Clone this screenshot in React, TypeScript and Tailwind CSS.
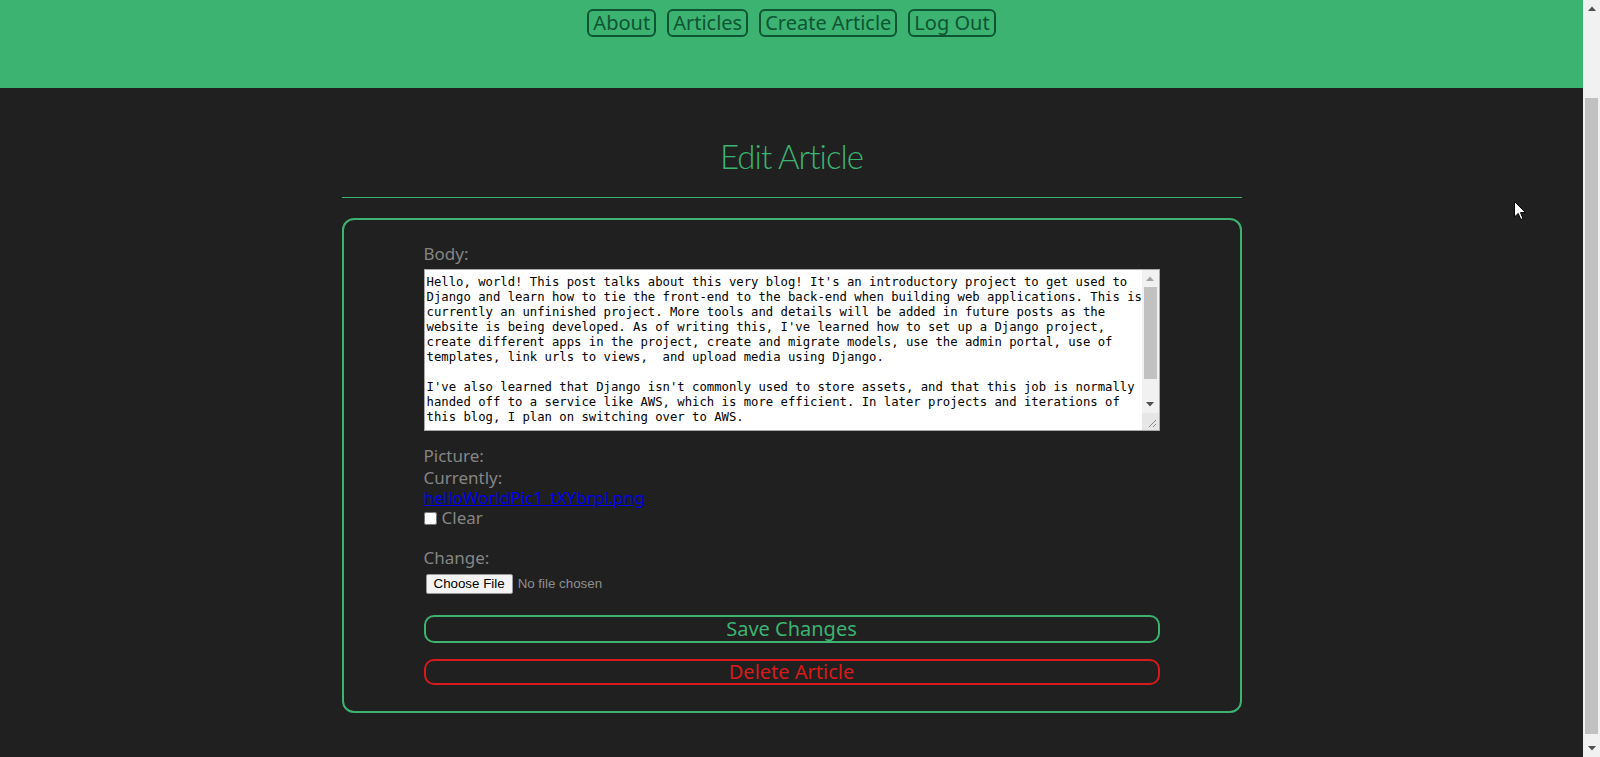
import React from 'react';

const bodyLines = [
  "Hello, world! This post talks about this very blog! It's an introductory project to get used to",
  'Django and learn how to tie the front-end to the back-end when building web applications. This is',
  'currently an unfinished project. More tools and details will be added in future posts as the',
  "website is being developed. As of writing this, I've learned how to set up a Django project,",
  'create different apps in the project, create and migrate models, use the admin portal, use of',
  'templates, link urls to views,  and upload media using Django.',
  '',
  "I've also learned that Django isn't commonly used to store assets, and that this job is normally",
  'handed off to a service like AWS, which is more efficient. In later projects and iterations of',
  'this blog, I plan on switching over to AWS.',
];

const navItems = ['About', 'Articles', 'Create Article', 'Log Out'];

function ArrowUp({ color }: { color: string }) {
  return (
    <svg width="8" height="5" viewBox="0 0 8 5">
      <path d="M0 5 L4 0.5 L8 5 Z" fill={color} />
    </svg>
  );
}

function ArrowDown({ color }: { color: string }) {
  return (
    <svg width="8" height="5" viewBox="0 0 8 5">
      <path d="M0 0 L4 4.5 L8 0 Z" fill={color} />
    </svg>
  );
}

function BodyField() {
  return (
    <div className="mt-[4px] flex h-[162px] border border-[#a9a9a9] bg-white">
      <div className="flex-1 overflow-hidden px-[2px] pt-[5px] font-['DejaVu_Sans_Mono',monospace] text-[12.25px] leading-[15px] text-black">
        {bodyLines.map((line, i) => (
          <div key={i} className="h-[15px] whitespace-pre">
            {line}
          </div>
        ))}
      </div>
      <div className="flex w-[17px] flex-col bg-[#f1f1f1]">
        <div className="flex h-[17px] items-center justify-center">
          <ArrowUp color="#a3a3a3" />
        </div>
        <div className="mx-[2px] h-[92px] bg-[#c1c1c1]" />
        <div className="flex-1" />
        <div className="flex h-[17px] items-center justify-center">
          <ArrowDown color="#505050" />
        </div>
        <div className="flex h-[17px] items-end justify-end bg-[#e6e6e6] p-[2px]">
          <svg width="10" height="10" viewBox="0 0 10 10">
            <path d="M9 2 L2 9 M9 6 L6 9" stroke="#8a8a8a" strokeWidth="1" />
          </svg>
        </div>
      </div>
    </div>
  );
}

export default function App() {
  return (
    <div className="relative flex h-[757px] w-full overflow-hidden bg-[#202020] font-['Noto_Sans',sans-serif]">
      <div className="flex flex-1 flex-col">
        <header className="flex h-[88px] items-start justify-center gap-[11px] bg-[#3cb371] pt-[9px]">
          {navItems.map((item) => (
            <a
              key={item}
              href="#"
              className="rounded-[6px] border-2 border-[#0e5534] px-[4px] text-[20px] leading-[24px] text-[#0e5534]"
            >
              {item}
            </a>
          ))}
        </header>

        <main className="flex-1">
          <div className="mx-auto w-[900px] pt-[48px]">
            <h1 className="text-center font-['Lato',sans-serif] text-[33px] font-light leading-[40px] tracking-[-1px] text-[#3cb371]">
              Edit Article
            </h1>
            <hr className="mt-[21px] border-t border-[#3cb371]" />

            <form className="mt-[20px] rounded-[12px] border-2 border-[#3cb371] px-[80px] pt-[22px] pb-[26px] text-[17px] text-[#858585]">
              <div className="leading-[23px]">Body:</div>
              <BodyField />

              <div className="mt-[15px] leading-[20px]">Picture:</div>
              <div className="mt-[2px] leading-[20px]">Currently:</div>
              <a href="#" className="block leading-[20px] text-[#0000ee] underline">
                helloWorldPic1_tXYbrpl.png
              </a>
              <label className="flex h-[20px] items-center">
                <input type="checkbox" className="m-0 h-[13px] w-[13px]" />
                <span className="ml-[5px]">Clear</span>
              </label>

              <div className="mt-[20px] leading-[20px]">Change:</div>
              <div className="mt-[6px] flex h-[20px] items-center font-['Liberation_Sans',Arial,sans-serif] text-[13.33px]">
                <span className="ml-[2px] flex h-[20px] items-center rounded-[2px] border border-[#9a9a9a] bg-[#f4f4f4] px-[7px] text-black">
                  Choose File
                </span>
                <span className="ml-[5px] text-[#8f8f8f]">No file chosen</span>
              </div>

              <button
                type="button"
                className="mt-[21px] block h-[28px] w-full rounded-[10px] border-2 border-[#3cb371] text-[20px] leading-[24px] text-[#3cb371]"
              >
                Save Changes
              </button>
              <button
                type="button"
                className="mt-[16px] block h-[26px] w-full rounded-[10px] border-2 border-[#d71a1a] text-[20px] leading-[22px] text-[#d71a1a]"
              >
                Delete Article
              </button>
            </form>
          </div>
        </main>
      </div>

      <div className="flex w-[17px] flex-col bg-[#f1f1f1]">
        <div className="flex h-[17px] items-center justify-center">
          <ArrowUp color="#505050" />
        </div>
        <div className="mx-[2px] mt-[81px] h-[636px] bg-[#c1c1c1]" />
        <div className="flex-1" />
        <div className="flex h-[17px] items-center justify-center">
          <ArrowDown color="#505050" />
        </div>
      </div>

      <svg
        className="pointer-events-none absolute left-[1514px] top-[201px]"
        width="13"
        height="20"
        viewBox="0 0 13 20"
      >
        <path d="M0.5 0.5 L0.5 16 L4.2 12.4 L6.8 18.5 L9 17.6 L6.5 11.6 L11.5 11.6 Z" fill="#fff" stroke="#000" strokeWidth="1" />
      </svg>
    </div>
  );
}
